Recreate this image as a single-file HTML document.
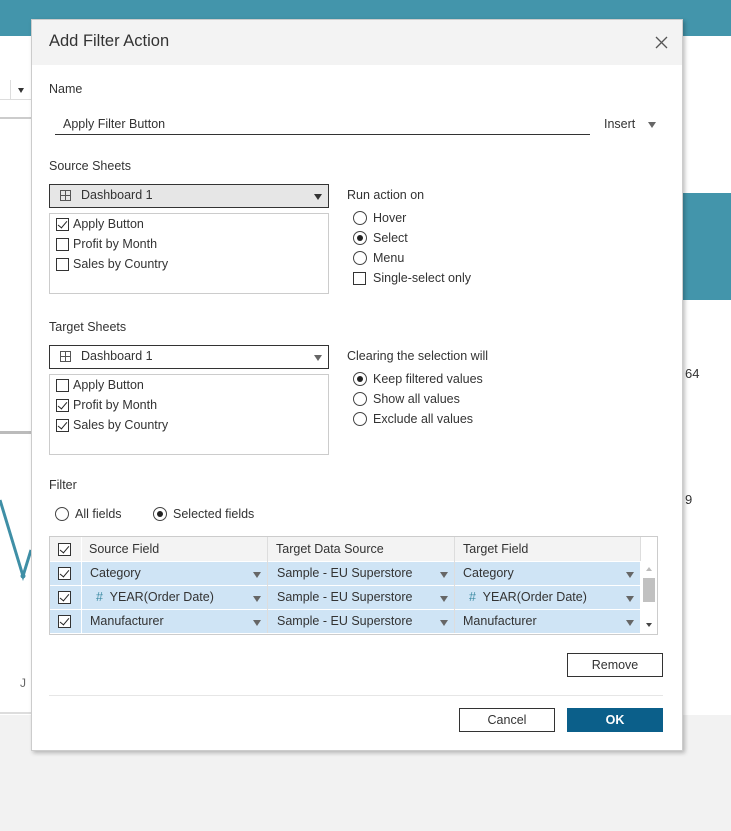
<!DOCTYPE html>
<html><head><style>
*{box-sizing:border-box;margin:0;padding:0}
body{width:731px;height:831px;position:relative;overflow:hidden;background:#fff;font-family:"Liberation Sans",sans-serif;font-size:12.5px;color:#333}
.a{position:absolute}
.cb{position:absolute;width:13px;height:13px;border:1px solid #333;background:#fff}
.cb.c::after{content:"";position:absolute;left:3px;top:0px;width:4px;height:8px;border:solid #222;border-width:0 1.5px 1.5px 0;transform:rotate(40deg)}
.rd{position:absolute;width:14px;height:14px;border:1px solid #444;border-radius:50%;background:#fff}
.rd.c::after{content:"";position:absolute;left:3px;top:3px;width:6px;height:6px;border-radius:50%;background:#222}
.tri{position:absolute;width:0;height:0;border-left:4px solid transparent;border-right:4px solid transparent;border-top:6px solid #333}
.tri.g{border-top-color:#666}
.grid{position:absolute;width:11px;height:11px;border:1px solid #555}
.grid::before{content:"";position:absolute;left:4px;top:0;width:1px;height:9px;background:#555}
.grid::after{content:"";position:absolute;top:4px;left:0;height:1px;width:9px;background:#555}
</style></head><body>
<!-- background -->
<div class="a" style="left:0;top:0;width:731px;height:36px;background:#4395ab"></div>
<div class="a" style="left:683px;top:193px;width:48px;height:107px;background:#4395ab"></div>
<div class="a" style="left:0;top:715px;width:731px;height:116px;background:#f2f2f2"></div>
<div class="a" style="left:0;top:80px;width:31px;height:20px;border-bottom:1px solid #ddd"></div>
<div class="a" style="left:10px;top:80px;width:1px;height:20px;background:#ddd"></div>
<div class="tri" style="left:18px;top:88px;border-width:5px 3px 0 3px"></div>
<div class="a" style="left:0;top:117px;width:31px;height:2px;background:#ccc"></div>
<div class="a" style="left:0;top:431px;width:31px;height:3px;background:#bbb"></div>
<svg class="a" style="left:0;top:480px" width="31" height="120"><path d="M0 20 L23 96 L31 70" stroke="#3f8fa6" stroke-width="3" fill="none"/><circle cx="23" cy="96" r="2.5" fill="#3f8fa6"/></svg>
<div class="a" style="left:20px;top:676px;font-size:12px;color:#666">J</div>
<div class="a" style="left:0;top:712px;width:31px;height:2px;background:#ddd"></div>
<div class="a" style="left:685px;top:366px;font-size:13px">64</div>
<div class="a" style="left:685px;top:492px;font-size:13px">9</div>
<!-- dialog -->
<div class="a" style="left:31px;top:19px;width:652px;height:732px;background:#fff;border:1px solid #ccc;box-shadow:2px 2px 4px rgba(0,0,0,.25)">
<div class="a" style="left:0;top:0;width:650px;height:45px;background:#f3f3f3"></div>
</div>
<div class="a" style="left:49px;top:32px;font-size:16.5px;color:#333">Add Filter Action</div>
<svg class="a" style="left:655px;top:36px" width="13" height="13"><path d="M1 1L12 12M12 1L1 12" stroke="#555" stroke-width="1.3"/></svg>

<div class="a" style="left:49px;top:82px">Name</div>
<div class="a" style="left:63px;top:117px">Apply Filter Button</div>
<div class="a" style="left:55px;top:134px;width:535px;height:1px;background:#333"></div>
<div class="a" style="left:604px;top:117px">Insert</div>
<div class="tri g" style="left:648px;top:122px"></div>

<div class="a" style="left:49px;top:159px">Source Sheets</div>
<div class="a" style="left:49px;top:184px;width:280px;height:24px;border:1px solid #333;background:#e6e6e6"></div>
<div class="grid" style="left:60px;top:190px"></div>
<div class="a" style="left:81px;top:188px">Dashboard 1</div>
<div class="tri" style="left:314px;top:194px"></div>
<div class="a" style="left:49px;top:213px;width:280px;height:81px;border:1px solid #ccc"></div>
<div class="cb c" style="left:56px;top:218px"></div><div class="a" style="left:73px;top:217px">Apply Button</div>
<div class="cb" style="left:56px;top:238px"></div><div class="a" style="left:73px;top:237px">Profit by Month</div>
<div class="cb" style="left:56px;top:258px"></div><div class="a" style="left:73px;top:257px">Sales by Country</div>

<div class="a" style="left:347px;top:188px">Run action on</div>
<div class="rd" style="left:353px;top:211px"></div><div class="a" style="left:373px;top:211px">Hover</div>
<div class="rd c" style="left:353px;top:231px"></div><div class="a" style="left:373px;top:231px">Select</div>
<div class="rd" style="left:353px;top:251px"></div><div class="a" style="left:373px;top:251px">Menu</div>
<div class="cb" style="left:353px;top:272px"></div><div class="a" style="left:373px;top:271px">Single-select only</div>

<div class="a" style="left:49px;top:320px">Target Sheets</div>
<div class="a" style="left:49px;top:345px;width:280px;height:24px;border:1px solid #333;background:#fff"></div>
<div class="grid" style="left:60px;top:351px"></div>
<div class="a" style="left:81px;top:349px">Dashboard 1</div>
<div class="tri g" style="left:314px;top:355px"></div>
<div class="a" style="left:49px;top:374px;width:280px;height:81px;border:1px solid #ccc"></div>
<div class="cb" style="left:56px;top:379px"></div><div class="a" style="left:73px;top:378px">Apply Button</div>
<div class="cb c" style="left:56px;top:399px"></div><div class="a" style="left:73px;top:398px">Profit by Month</div>
<div class="cb c" style="left:56px;top:419px"></div><div class="a" style="left:73px;top:418px">Sales by Country</div>

<div class="a" style="left:347px;top:349px">Clearing the selection will</div>
<div class="rd c" style="left:353px;top:372px"></div><div class="a" style="left:373px;top:372px">Keep filtered values</div>
<div class="rd" style="left:353px;top:392px"></div><div class="a" style="left:373px;top:392px">Show all values</div>
<div class="rd" style="left:353px;top:412px"></div><div class="a" style="left:373px;top:412px">Exclude all values</div>

<div class="a" style="left:49px;top:478px">Filter</div>
<div class="rd" style="left:55px;top:507px"></div><div class="a" style="left:75px;top:507px">All fields</div>
<div class="rd c" style="left:153px;top:507px"></div><div class="a" style="left:173px;top:507px">Selected fields</div>

<!-- table -->
<div class="a" style="left:49px;top:536px;width:609px;height:99px;border:1px solid #ccc;background:#fff"></div>
<div class="a" style="left:50px;top:537px;width:590px;height:24px;background:#f3f3f3"></div>
<div class="a" style="left:50px;top:562px;width:590px;height:23px;background:#cfe4f5"></div>
<div class="a" style="left:50px;top:586px;width:590px;height:23px;background:#cfe4f5"></div>
<div class="a" style="left:50px;top:610px;width:590px;height:23px;background:#cfe4f5"></div>
<div class="a" style="left:81px;top:537px;width:1px;height:96px;background:#fff"></div>
<div class="a" style="left:267px;top:537px;width:1px;height:96px;background:#ddd"></div>
<div class="a" style="left:454px;top:537px;width:1px;height:96px;background:#ddd"></div>
<div class="a" style="left:640px;top:537px;width:1px;height:24px;background:#ddd"></div>
<div class="cb c" style="left:58px;top:543px"></div>
<div class="a" style="left:89px;top:542px">Source Field</div>
<div class="a" style="left:276px;top:542px">Target Data Source</div>
<div class="a" style="left:463px;top:542px">Target Field</div>
<div class="cb c" style="left:58px;top:567px"></div>
<div class="a" style="left:90px;top:566px">Category</div><div class="tri g" style="left:253px;top:572px"></div>
<div class="a" style="left:277px;top:566px">Sample - EU Superstore</div><div class="tri g" style="left:440px;top:572px"></div>
<div class="a" style="left:463px;top:566px">Category</div><div class="tri g" style="left:626px;top:572px"></div>
<div class="cb c" style="left:58px;top:591px"></div>
<div class="a" style="left:96px;top:590px"><span style="color:#3e8ca4">#</span>&nbsp; YEAR(Order Date)</div><div class="tri g" style="left:253px;top:596px"></div>
<div class="a" style="left:277px;top:590px">Sample - EU Superstore</div><div class="tri g" style="left:440px;top:596px"></div>
<div class="a" style="left:469px;top:590px"><span style="color:#3e8ca4">#</span>&nbsp; YEAR(Order Date)</div><div class="tri g" style="left:626px;top:596px"></div>
<div class="cb c" style="left:58px;top:615px"></div>
<div class="a" style="left:90px;top:614px">Manufacturer</div><div class="tri g" style="left:253px;top:620px"></div>
<div class="a" style="left:277px;top:614px">Sample - EU Superstore</div><div class="tri g" style="left:440px;top:620px"></div>
<div class="a" style="left:463px;top:614px">Manufacturer</div><div class="tri g" style="left:626px;top:620px"></div>
<div class="a" style="left:643px;top:578px;width:12px;height:24px;background:#c1c1c1"></div>
<div class="a" style="left:646px;top:567px;border-left:3px solid transparent;border-right:3px solid transparent;border-bottom:4px solid #bbb"></div>
<div class="a" style="left:646px;top:623px;border-left:3px solid transparent;border-right:3px solid transparent;border-top:4px solid #444"></div>

<div class="a" style="left:567px;top:653px;width:96px;height:24px;border:1px solid #333;text-align:center;line-height:22px">Remove</div>
<div class="a" style="left:49px;top:695px;width:614px;height:1px;background:#e6e6e6"></div>
<div class="a" style="left:459px;top:708px;width:96px;height:24px;border:1px solid #333;text-align:center;line-height:22px">Cancel</div>
<div class="a" style="left:567px;top:708px;width:96px;height:24px;background:#0b5f8a;color:#fff;font-weight:bold;text-align:center;line-height:24px">OK</div>
</body></html>
